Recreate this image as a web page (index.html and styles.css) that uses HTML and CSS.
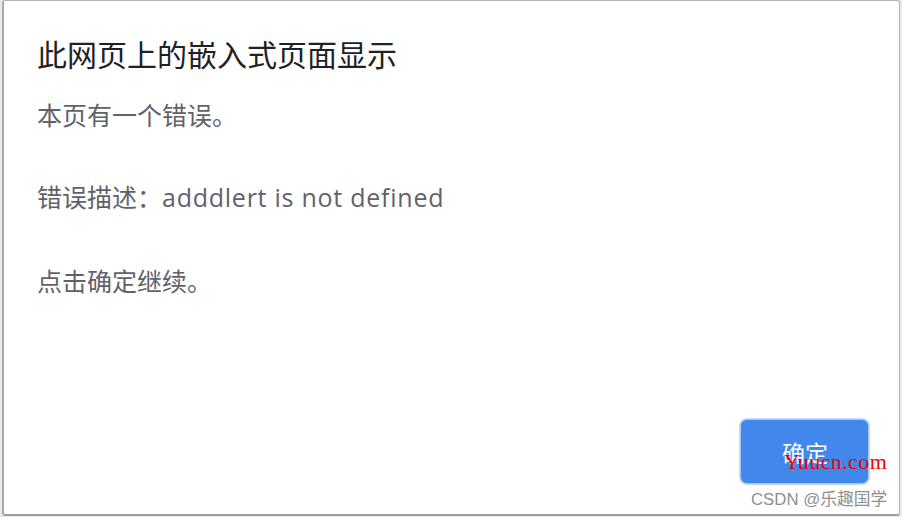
FILE: index.html
```html
<!DOCTYPE html>
<html lang="zh">
<head>
<meta charset="utf-8">
<link rel="stylesheet" href="styles.css">
</head>
<body>
<div class="dialog">
  <h1 class="title">此网页上的嵌入式页面显示</h1>
  <div class="message">
    <p class="line first">本页有一个错误。</p>
    <p class="line second">错误描述：<span class="latin">adddlert is not defined</span></p>
    <p class="line">点击确定继续。</p>
  </div>
  <div class="actions">
    <button class="ok">确定</button>
  </div>
  <span class="wm-red">Yuucn.com</span>
  <span class="wm-gray">CSDN @乐趣国学</span>
</div>
</body>
</html>
```
FILE: styles.css
```css
html, body {
  margin: 0;
  padding: 0;
  width: 902px;
  height: 517px;
  background: #e9e9e9;
  overflow: hidden;
}
body {
  font-family: "Open Sans", "Noto Sans CJK SC", sans-serif;
}
.dialog {
  position: relative;
  box-sizing: border-box;
  margin: 0 2px 0 2px;
  width: 898px;
  height: 516px;
  background: #fff;
  border: 1px solid #b5b5b5;
  border-left: 2px solid #a9a9a9;
  border-bottom: 2px solid #9f9f9f;
  border-radius: 3px;
  padding: 28px 36px 0 33px;
  display: flex;
  flex-direction: column;
}
.title {
  margin: 0;
  font-weight: 400;
  font-size: 30px;
  line-height: 52px;
  color: #202124;
}
.message {
  margin-top: 14px;
  color: #5f6368;
  font-size: 25px;
  line-height: 40px;
}
.line {
  margin: 0 0 42px 0;
}
.second {
  margin-bottom: 44px;
}
.latin {
  letter-spacing: 0.75px;
}
.actions {
  margin-top: auto;
  margin-bottom: 30px;
  display: flex;
  justify-content: flex-end;
}
.ok {
  width: 129px;
  height: 65px;
  margin-right: -6px;
  background: #4287ec;
  color: #fff;
  border: 1px solid #a9c8f5;
  box-shadow: 0 0 0 1px #c6dbfa;
  border-radius: 7px;
  font-family: "Open Sans", "Noto Sans CJK SC", sans-serif;
  font-size: 23px;
  padding: 0 0 0 1px;
}
.wm-red {
  position: absolute;
  left: 780px;
  top: 448px;
  font-family: "Liberation Serif", serif;
  font-size: 22px;
  color: #f00000;
  letter-spacing: 0.4px;
}
.wm-gray {
  position: absolute;
  left: 747px;
  top: 485px;
  font-family: "Liberation Sans", "Noto Sans CJK SC", sans-serif;
  font-size: 16.8px;
  color: #8f8f8f;
}
```
